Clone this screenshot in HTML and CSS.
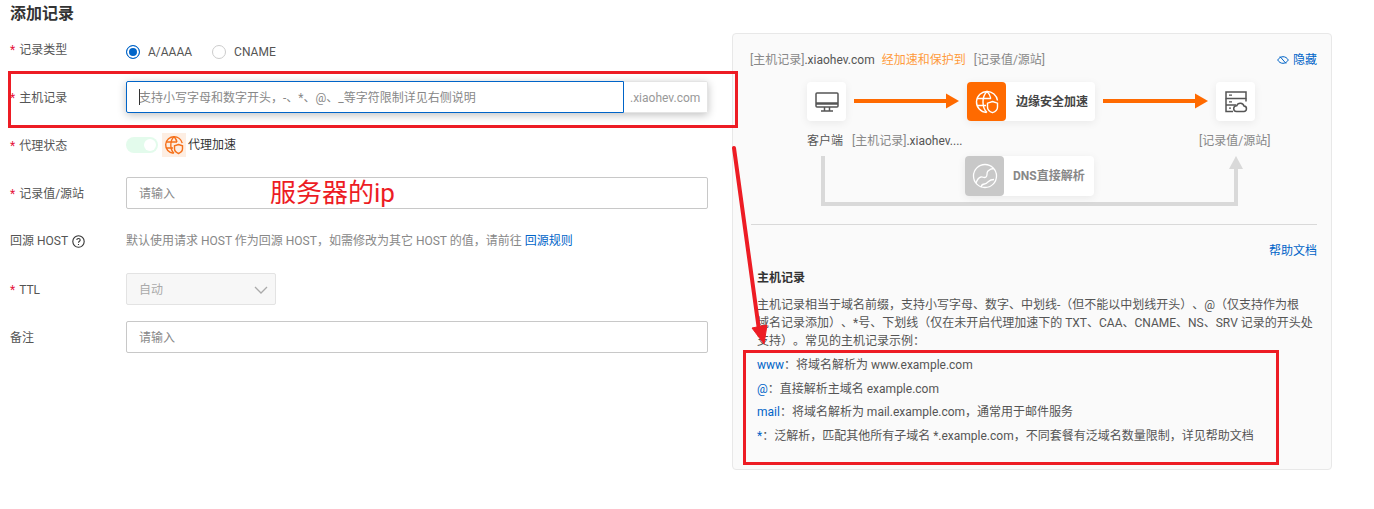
FILE: index.html
```html
<!DOCTYPE html>
<html lang="zh-CN">
<head>
<meta charset="utf-8">
<title>添加记录</title>
<link rel="stylesheet" href="styles.css">
</head>
<body>
<main class="page">
  <section class="form">
    <h1 class="title">添加记录</h1>
    <div class="row">
      <div class="label"><span class="req">*</span> 记录类型</div>
      <div class="radios">
        <span class="radio on"></span><span class="radio-text">A/AAAA</span>
        <span class="radio"></span><span class="radio-text">CNAME</span>
      </div>
    </div>
    <div class="row">
      <div class="label"><span class="req">*</span> 主机记录</div>
      <div class="group">
        <div class="input focus"><i class="caret"></i>支持小写字母和数字开头，-、*、@、_等字符限制详见右侧说明</div>
        <div class="addon">.xiaohev.com</div>
      </div>
    </div>
    <div class="row">
      <div class="label"><span class="req">*</span> 代理状态</div>
      <div class="proxy">
        <span class="switch"><i class="knob"></i></span>
        <span class="proxy-icon">
          <svg width="20" height="20" viewBox="0 0 20 20" fill="none" stroke="#f5701a" stroke-width="1.4"><path d="M10.5 1.7a8.3 8.3 0 1 0 -1 16.6"/><path d="M18.2 8.2A8.3 8.3 0 0 0 10 1.7c-2.2 2-3.2 5-3.2 8.3s1 6.300 3.200 8.300"/><path d="M10 1.700c1.500 1.400 2.500 3.200 3 5.300"/><path d="M2 7h11M2 13h7"/><path d="M14.500 9.500l4 1.300v3c0 2.400-1.700 3.800-4 4.700-2.300-.9-4-2.300-4-4.700v-3z" fill="#fdeee3"/></svg>
        </span>
        <span class="proxy-text">代理加速</span>
      </div>
    </div>
    <div class="row">
      <div class="label"><span class="req">*</span> 记录值/源站</div>
      <div class="input wide">请输入</div>
    </div>
    <div class="row">
      <div class="label label-host">回源 HOST
        <svg class="help" width="13" height="13" viewBox="0 0 13 13" fill="none" stroke="#333" stroke-width="1.100"><circle cx="6.500" cy="6.500" r="5.700"/><path d="M4.800 5.100c0-1 .8-1.600 1.700-1.600s1.700.6 1.700 1.500c0 1.300-1.700 1.300-1.700 2.700"/><path d="M6.500 9v1"/></svg>
      </div>
      <div class="hint">默认使用请求 HOST 作为回源 HOST，如需修改为其它 HOST 的值，请前往 <a class="link">回源规则</a></div>
    </div>
    <div class="row">
      <div class="label"><span class="req">*</span> TTL</div>
      <div class="select">
        <span>自动</span>
        <svg width="14" height="8" viewBox="0 0 14 8" fill="none" stroke="#aaa" stroke-width="1.300"><path d="M1 1l6 6 6-6"/></svg>
      </div>
    </div>
    <div class="row">
      <div class="label">备注</div>
      <div class="input wide">请输入</div>
    </div>
  </section>

  <aside class="panel">
    <div class="panel-head">
      <div><span class="muted">[主机记录]</span>.xiaohev.com<span class="orange">经加速和保护到</span><span class="muted">[记录值/源站]</span></div>
      <a class="link hide">
        <svg width="12" height="10" viewBox="0 0 12 10" fill="none" stroke="#0064c8" stroke-width="1"><path d="M.7 5C2 2.800 3.800 1.700 6 1.700S10 2.800 11.300 5C10 7.200 8.200 8.300 6 8.300S2 7.200.7 5z"/><path d="M3 1.500l6 7"/></svg>
        隐藏</a>
    </div>
    <div class="diagram">
      <svg class="lines" width="600" height="155" viewBox="0 0 600 155" fill="none">
        <path d="M121 31H215" stroke="#ff6a00" stroke-width="4"/>
        <path d="M213 23.500L226 31L213 38.500z" fill="#ff6a00"/>
        <path d="M370 31H464" stroke="#ff6a00" stroke-width="4"/>
        <path d="M462 23.500L475 31L462 38.500z" fill="#ff6a00"/>
        <path d="M90 86V134H503V97" stroke="#d9d9d9" stroke-width="4"/>
        <path d="M496 99L503 86L510 99z" fill="#d9d9d9"/>
      </svg>
      <div class="node client">
        <svg width="24" height="24" viewBox="0 0 24 24" fill="none" stroke="#555" stroke-width="1.500"><rect x="1" y="3" width="22" height="14" rx="1"/><path d="M1 13.500h22" stroke-width="2.500"/><path d="M9.500 17v3.500M14.500 17v3.500M6 21h12"/></svg>
      </div>
      <div class="node-wide edge">
        <span class="node-icon orange-bg">
          <svg width="24" height="24" viewBox="0 0 24 24" fill="none" stroke="#fff" stroke-width="1.400"><path d="M12.500 1.500a10.500 10.500 0 1 0-1 21"/><path d="M22.500 10.500A10.500 10.500 0 0 0 12 1.500C9.300 4 8 7.700 8 12s1.300 8 4 10.500"/><path d="M12 1.500c2 1.800 3.300 4.200 3.800 7"/><path d="M2 8.500h14M2 15.500h9"/><path d="M17.500 11.500l5 1.700v3.700c0 3-2.200 4.800-5 5.800-2.800-1-5-2.800-5-5.800v-3.700z" fill="#ff6a00"/></svg>
        </span>
        <b class="node-text">边缘安全加速</b>
      </div>
      <div class="node server">
        <svg width="24" height="24" viewBox="0 0 24 24" fill="none" stroke="#555" stroke-width="1.500"><rect x="2" y="2" width="20" height="6.500"/><path d="M2 8.500v6.500h10M22 8.500v3M2 15v6.500h7"/><path d="M5 5.200h3M5 11.800h3M5 18.200h2" stroke-width="1.300"/><path d="M12.500 21.500h7a2.700 2.700 0 0 0 .5-5.400 3.800 3.800 0 0 0-7.300-.4 2.900 2.900 0 0 0-.2 5.800z" fill="#fff"/></svg>
      </div>
      <div class="cap cap-client">客户端</div>
      <div class="cap cap-host"><span class="muted">[主机记录]</span>.xiaohev....</div>
      <div class="cap cap-origin muted">[记录值/源站]</div>
      <div class="node-wide dns">
        <span class="node-icon grey-bg">
          <svg width="26" height="26" viewBox="0 0 26 26" fill="none" stroke="#fff" stroke-width="1.300"><circle cx="13" cy="13" r="11.500"/><path d="M4 20c1-3 3-5.500 5-6 2-.5 3 1.500 5 0s0-4 2-6 4-2.500 6-2.500M9 24c.5-2 2-3 3.500-3s2.500-1 4-2.500 3-2 5.500-2"/></svg>
        </span>
        <b class="node-text grey">DNS直接解析</b>
      </div>
    </div>
    <div class="help-row"><a class="link">帮助文档</a></div>
    <div class="doc">
      <h2 class="doc-title">主机记录</h2>
      <p class="doc-para">主机记录相当于域名前缀，支持小写字母、数字、中划线-（但不能以中划线开头）、@（仅支持作为根<br>域名记录添加）、*号、下划线（仅在未开启代理加速下的 TXT、CAA、CNAME、NS、SRV 记录的开头处<br>支持）。常见的主机记录示例：</p>
      <ul class="examples">
        <li><span class="code">www</span>：将域名解析为 www.example.com</li>
        <li><span class="code">@</span>：直接解析主域名 example.com</li>
        <li><span class="code">mail</span>：将域名解析为 mail.example.com，通常用于邮件服务</li>
        <li><span class="code">*</span>：泛解析，匹配其他所有子域名 *.example.com，不同套餐有泛域名数量限制，详见帮助文档</li>
      </ul>
    </div>
  </aside>
</main>

<div class="mark mark-host"></div>
<div class="mark mark-examples"></div>
<div class="mark-text">服务器的ip</div>
<svg class="mark-arrow" width="1374" height="509" viewBox="0 0 1374 509" fill="none">
  <path d="M734 148L759 330" stroke="#ed1c24" stroke-width="4" stroke-linecap="round"/>
  <path d="M752 328L767 325L764 344z" fill="#ed1c24" stroke="#ed1c24" stroke-width="1"/>
</svg>
</body>
</html>
```
FILE: styles.css
```css
* { box-sizing: border-box; }
html, body { margin: 0; padding: 0; }
body {
  width: 1374px;
  height: 509px;
  overflow: hidden;
  background: #fff;
  color: #333;
  font: 12px/18px Roboto, "Noto Sans CJK SC", sans-serif;
  text-spacing-trim: space-all;
  position: relative;
}
.page { display: flex; gap: 24px; padding-left: 10px; align-items: flex-start; }
.form { width: 698px; flex: none; }
.title { margin: 0; height: 33px; font-size: 16px; line-height: 28px; font-weight: 700; color: #333; }
.row { display: flex; align-items: center; height: 32px; margin-bottom: 16px; }
.label { width: 116px; flex: none; color: #555; display: flex; align-items: center; gap: 4px; margin-top: 2px; }
.label-host { margin-top: 0; }
.req { color: #e5143c; }
.radios { display: flex; align-items: center; margin-top: 6px; color: #555; }
.radio { width: 14px; height: 14px; border-radius: 50%; border: 1px solid #ccc; background: #fff; margin-right: 8px; }
.radio.on { border-color: #0064c8; box-shadow: inset 0 0 0 2px #fff; background: #0064c8; }
.radio-text { margin-right: 20px; }
.group { display: flex; flex: 1; height: 32px; box-shadow: 0 2px 8px rgba(0,0,0,.25); border-radius: 2px; }
.input {
  height: 32px; border: 1px solid #c8c8c8; border-radius: 2px; padding: 0 12px;
  color: #888; line-height: 32px; background: #fff; position: relative;
}
.input.wide { flex: 1; }
.input.focus { flex: 1; border-color: #0064c8; border-right-width: 1px; border-radius: 2px 0 0 2px; }
.caret { position: absolute; left: 12px; top: 7px; width: 1px; height: 16px; background: #333; }
.addon { width: 84px; flex: none; line-height: 32px; padding-left: 6px; color: #999; background: #fff; border: 1px solid #e4e4e4; border-left: 0; border-radius: 0 2px 2px 0; }
.proxy { display: flex; align-items: center; }
.switch { width: 32px; height: 16px; border-radius: 8px; background: #e3fbec; position: relative; margin-right: 4px; }
.knob { position: absolute; right: 2px; top: 2px; width: 12px; height: 12px; border-radius: 50%; background: #fff; }
.proxy-icon { width: 24px; height: 24px; background: #fdeee3; display: flex; align-items: center; justify-content: center; margin-right: 2px; }
.proxy-text { color: #333; }
.hint { color: #888; margin-top: 0; }
.link { color: #0064c8; text-decoration: none; }
.select {
  width: 150px; height: 32px; background: #f7f7f7; border: 1px solid #e3e3e3; border-radius: 2px;
  padding: 1px 7px 0 12px; color: #aaa; display: flex; align-items: center; justify-content: space-between;
}
.panel {
  width: 600px; height: 437px; margin-top: 33px; flex: none; background: #fafafa;
  border: 1px solid #e8e8e8; border-radius: 4px; padding: 16px 14px 0 17px;
}
.panel-head { display: flex; justify-content: space-between; align-items: center; height: 20px; color: #555; }
.muted { color: #888; }
.orange { color: #ff9a3c; margin: 0 8px 0 7px; }
.hide { display: flex; align-items: center; gap: 4px; }
.diagram { position: relative; height: 155px; margin: 0 -14px 0 -17px; }
.diagram::after { content: ""; position: absolute; left: 18px; right: 14px; bottom: 0; height: 1px; background: #d9d9d9; }
.lines { position: absolute; left: 0; top: 0; overflow: visible; }
.node, .node-wide { position: absolute; background: #fff; border-radius: 4px; box-shadow: 0 2px 8px rgba(0,0,0,.07); height: 39px; }
.node { width: 39px; display: flex; align-items: center; justify-content: center; }
.client { left: 74px; top: 12px; }
.server { left: 483px; top: 12px; }
.node-wide { display: flex; align-items: center; }
.edge { left: 234px; top: 12px; width: 128px; }
.dns { left: 232px; top: 86px; width: 129px; height: 40px; }
.node-icon { width: 39px; height: 100%; border-radius: 4px; display: flex; align-items: center; justify-content: center; margin-right: 10px; }
.dns .node-icon { margin-right: 9px; }
.orange-bg { background: #ff6a00; }
.grey-bg { background: #c8c8c8; }
.node-text { font-weight: 700; color: #444; }
.node-text.grey { color: #888; }
.cap { position: absolute; top: 62px; white-space: nowrap; }
.cap-client { left: 74px; color: #555; }
.cap-host { left: 119px; color: #555; }
.cap-origin { left: 466px; }
.help-row { display: flex; justify-content: flex-end; margin-top: 17px; }
.doc { padding-left: 7px; color: #555; }
.doc-title { margin: 9px 0 0; font-size: 12px; line-height: 18px; font-weight: 700; color: #333; }
.doc-para { margin: 9px 0 0; white-space: nowrap; }
.examples { list-style: none; margin: 3px 0 0; padding: 0; }
.examples li { height: 23.700px; line-height: 24px; white-space: nowrap; }
.code { color: #0064c8; }
.mark { position: absolute; border: 3px solid #ed1c24; pointer-events: none; }
.mark-host { left: 8px; top: 71px; width: 730px; height: 57px; }
.mark-examples { left: 743px; top: 350px; width: 536px; height: 115px; }
.mark-text { position: absolute; left: 270px; top: 175px; font-size: 26px; line-height: 36px; color: #ed1c24; font-family: Roboto, "Noto Sans CJK SC", sans-serif; }
.mark-arrow { position: absolute; left: 0; top: 0; }
```
